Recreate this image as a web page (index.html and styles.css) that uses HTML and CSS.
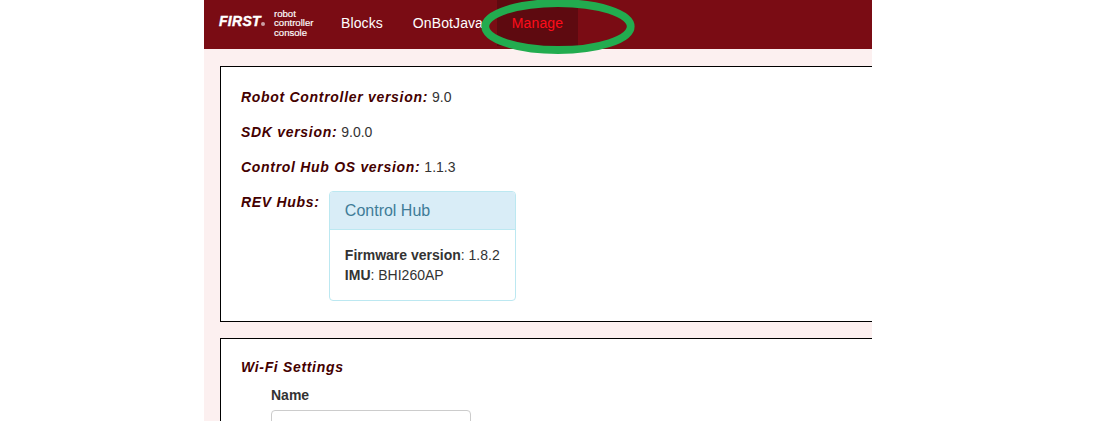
FILE: index.html
```html
<!DOCTYPE html>
<html lang="en">
<head>
<meta charset="utf-8">
<title>Robot Controller Console</title>
<link rel="stylesheet" href="styles.css">
</head>
<body>
<div class="page">
  <nav class="navbar">
    <div class="brand">
      <span class="first">FIRST<i class="reg"></i></span>
      <span class="rcc">robot<br>controller<br>console</span>
    </div>
    <a class="tab tab-blocks">Blocks</a>
    <a class="tab tab-java">OnBotJava</a>
    <a class="tab active">Manage</a>
  </nav>
  <svg class="ring" width="170" height="70" viewBox="0 0 170 70" aria-hidden="true">
    <ellipse cx="85" cy="36.5" rx="72.7" ry="23.5" fill="none" stroke="#22ac4f" stroke-width="7.8"/>
  </svg>
  <main class="content">
    <section class="card card-info">
      <p class="row"><b class="key">Robot Controller version:</b> 9.0</p>
      <p class="row"><b class="key">SDK version:</b> 9.0.0</p>
      <p class="row"><b class="key">Control Hub OS version:</b> 1.1.3</p>
      <div class="hubs">
        <b class="key hubs-key">REV Hubs:</b>
        <div class="panel">
          <div class="panel-head">Control Hub</div>
          <div class="panel-body"><b>Firmware version</b>: 1.8.2<br><b>IMU</b>: BHI260AP</div>
        </div>
      </div>
    </section>
    <section class="card card-wifi">
      <h2 class="key wifi-title">Wi-Fi Settings</h2>
      <div class="field">
        <label class="label">Name</label>
        <div class="input"></div>
      </div>
    </section>
  </main>
</div>
</body>
</html>
```
FILE: styles.css
```css
* { box-sizing: border-box; }
html, body { margin: 0; height: 100%; background: #fff; overflow: hidden; }
body { font-family: "Liberation Sans", Arial, sans-serif; font-size: 14px; line-height: 20px; color: #333; }
.page { position: relative; width: 668px; height: 421px; margin-left: 204px; background: #fcf0f0; overflow: hidden; }
.navbar { display: flex; align-items: flex-start; height: 49px; background: #7a0c14; color: #fff; }
.brand { display: flex; align-items: flex-start; width: 120px; height: 49px; padding: 9px 0 0 15px; }
.first { position: relative; width: 55px; margin-top: 4px; font: italic bold 14px/16px "Liberation Sans", Arial, sans-serif; letter-spacing: 0.3px; color: #fff; -webkit-text-stroke: 0.4px #fff; }
.reg { position: absolute; left: 42px; top: 9px; width: 4px; height: 4px; border-radius: 50%; background: #c9a0a4; }
.rcc { font-size: 9.6px; line-height: 9.4px; color: #fff; -webkit-text-stroke: 0.15px #fff; }
.tab { display: block; height: 46px; padding: 13px 15px; font-size: 14px; letter-spacing: 0.1px; color: #fff; }
.tab-blocks { margin-left: 2px; }
.tab-java { width: 99px; }
.active { color: #ff0d1a; background: #5e0a10; width: 81px; }
.ring { position: absolute; left: 268.5px; top: -10px; }
.content { display: flex; flex-direction: column; gap: 16px; padding: 17px 0 0 16px; width: 900px; }
.card { background: #fff; border: 1px solid #000; padding: 20px; width: 860px; }
.card-info { height: 256px; }
.row { margin: 0 0 15px; }
.row:nth-child(3) { margin-bottom: 14px; }
.key { font-weight: bold; font-style: italic; color: #400; letter-spacing: 0.7px; }
.hubs { display: flex; align-items: flex-start; gap: 9.2px; }
.hubs-key { padding-top: 1px; }
.panel { width: 187px; height: 110px; background: #fff; border: 1px solid #bce8f1; border-radius: 4px; overflow: hidden; }
.panel-head { height: 38px; padding: 9px 15px; background: #d9edf7; border-bottom: 1px solid #bce8f1; color: #3f7c98; font-size: 16px; line-height: 20px; }
.panel-body { padding: 15px; }
.card-wifi { height: 200px; padding-top: 18px; }
.wifi-title { margin: 0; font-size: 14px; line-height: 20px; letter-spacing: 0.67px; }
.field { padding: 8px 0 0 30px; }
.label { display: block; font-weight: bold; margin-bottom: 5px; }
.input { width: 200px; height: 34px; border: 1px solid #ccc; border-radius: 4px; background: #fff; }
```
